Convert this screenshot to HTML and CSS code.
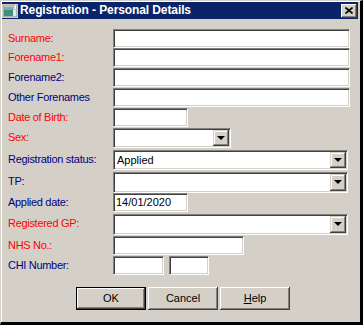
FILE: index.html
```html
<!DOCTYPE html>
<html>
<head>
<meta charset="utf-8">
<link rel="stylesheet" href="styles.css">
</head>
<body>
<div class="win">
  <div class="titlebar">
    <svg class="appicon" width="16" height="14" viewBox="0 0 16 14">
      <rect x="0.5" y="0.5" width="15" height="13" fill="#c8c8c8" stroke="#f0f0f0"/>
      <rect x="1" y="1" width="14" height="12" fill="none" stroke="#7a7a7a" stroke-width="0.6"/>
      <rect x="2" y="3" width="9" height="9" fill="#3f8f7f"/>
      <rect x="2" y="3" width="9" height="3" fill="#6fb3a3"/>
      <rect x="11" y="6" width="3" height="6" fill="#e8e8e8"/>
      <rect x="13" y="1" width="1" height="4" fill="#ffffff"/>
    </svg>
    <span class="title">Registration - Personal Details</span>
    <div class="close">
      <svg width="8" height="7" viewBox="0 0 8 7"><path d="M0.5 0.5 L7.5 6.5 M7.5 0.5 L0.5 6.5" stroke="#000" stroke-width="1.6"/></svg>
    </div>
  </div>
  <div class="form">
    <div class="lbl req">Surname:</div><div class="box w-full"></div>
    <div class="lbl req">Forename1:</div><div class="box w-full"></div>
    <div class="lbl opt">Forename2:</div><div class="box w-full"></div>
    <div class="lbl opt">Other Forenames</div><div class="box w-full"></div>
    <div class="lbl req">Date of Birth:</div><div class="box w-date"></div>
    <div class="lbl req">Sex:</div><div class="box combo w-sex"><span class="val"></span><span class="drop"><span class="tri"></span></span></div>
    <div class="lbl opt">Registration status:</div><div class="box combo w-combo"><span class="val">Applied</span><span class="drop"><span class="tri"></span></span></div>
    <div class="lbl opt">TP:</div><div class="box combo w-combo h21"><span class="val"></span><span class="drop"><span class="tri"></span></span></div>
    <div class="lbl opt">Applied date:</div><div class="box w-date"><span class="val">14/01/2020</span></div>
    <div class="lbl req">Registered GP:</div><div class="box combo w-combo h21"><span class="val"></span><span class="drop"><span class="tri"></span></span></div>
    <div class="lbl req">NHS No.:</div><div class="box w-nhs"></div>
    <div class="lbl opt">CHI Number:</div><div class="chi"><div class="box w-chi1"></div><div class="box w-chi2"></div></div>
  </div>
  <div class="buttons">
    <div class="btn default"><span>OK</span></div>
    <div class="btn"><span>Cancel</span></div>
    <div class="btn"><span><u>H</u>elp</span></div>
  </div>
</div>
</body>
</html>
```

FILE: styles.css
```css
html, body {
  margin: 0;
  padding: 0;
  background: #d4d0c8;
}
.win {
  width: 363px;
  height: 325px;
  box-sizing: border-box;
  background: #d4d0c8;
  border-style: solid;
  border-width: 1px 3px 3px 1px;
  border-color: #d4d0c8 #000 #000 #d4d0c8;
  box-shadow: inset 1px 1px #fff;
  padding: 1px 2px 0 1px;
  font-family: "Liberation Sans", Arial, sans-serif;
  font-size: 11px;
  color: #000;
}
.titlebar {
  height: 17px;
  background: #0a246a;
  display: flex;
  align-items: center;
}
.appicon {
  display: block;
  flex: none;
}
.title {
  margin-left: 2px;
  color: #fff;
  font-weight: bold;
  font-size: 12px;
  letter-spacing: -0.1px;
  line-height: 17px;
  white-space: nowrap;
}
.close {
  margin-left: auto;
  margin-right: 1px;
  width: 16px;
  height: 14px;
  box-sizing: border-box;
  background: #d4d0c8;
  box-shadow: inset -1px -1px #404040, inset 1px 1px #fff, inset -2px -2px #808080;
  display: flex;
  align-items: center;
  justify-content: center;
  padding: 0 1px 1px 0;
}
.close svg { display: block; }
.form {
  display: grid;
  grid-template-columns: 105px auto;
  grid-template-rows: 19px 20px 20px 20px 20px 22px 22px 21px 21px 22px 20px 20px;
  margin-top: 10px;
  padding-left: 6px;
  align-items: start;
}
.lbl {
  line-height: 19px;
  letter-spacing: -0.3px;
  white-space: nowrap;
}
.req { color: #ff0000; }
.opt { color: #000080; }
.box {
  box-sizing: border-box;
  height: 19px;
  background: #fff;
  border: 1px solid;
  border-color: #808080 #fff #fff #808080;
  box-shadow: inset 1px 1px #404040, inset -1px -1px #d4d0c8;
  display: flex;
  align-items: center;
}
.val {
  flex: 1;
  padding-left: 2px;
  line-height: 15px;
  white-space: nowrap;
}
.combo {
  height: 20px;
  padding: 1px;
}
.h21 { height: 21px; }
.drop {
  width: 16px;
  align-self: stretch;
  box-sizing: border-box;
  background: #d4d0c8;
  box-shadow: inset -1px -1px #404040, inset 1px 1px #d4d0c8, inset -2px -2px #808080, inset 2px 2px #fff;
  display: flex;
  align-items: center;
  justify-content: center;
  padding: 0 1px 1px 0;
}
.tri {
  width: 0;
  height: 0;
  border-left: 4px solid transparent;
  border-right: 4px solid transparent;
  border-top: 4px solid #000;
}
.w-full { width: 237px; }
.w-combo { width: 235px; }
.w-date { width: 75px; }
.w-sex { width: 118px; }
.w-nhs { width: 131px; }
.w-chi1 { width: 51px; }
.w-chi2 { width: 40px; }
.chi {
  display: flex;
  gap: 5px;
}
.chi .box { height: 19px; }
.buttons {
  display: flex;
  gap: 2px;
  margin-top: 11px;
  padding-left: 74px;
}
.btn {
  width: 70px;
  height: 23px;
  box-sizing: border-box;
  background: #d4d0c8;
  box-shadow: inset -1px -1px #404040, inset 1px 1px #fff, inset -2px -2px #808080;
  display: flex;
  align-items: center;
  justify-content: center;
  line-height: 14px;
}
.btn.default {
  border: 1px solid #000;
}
.btn span { padding-bottom: 1px; }
```
